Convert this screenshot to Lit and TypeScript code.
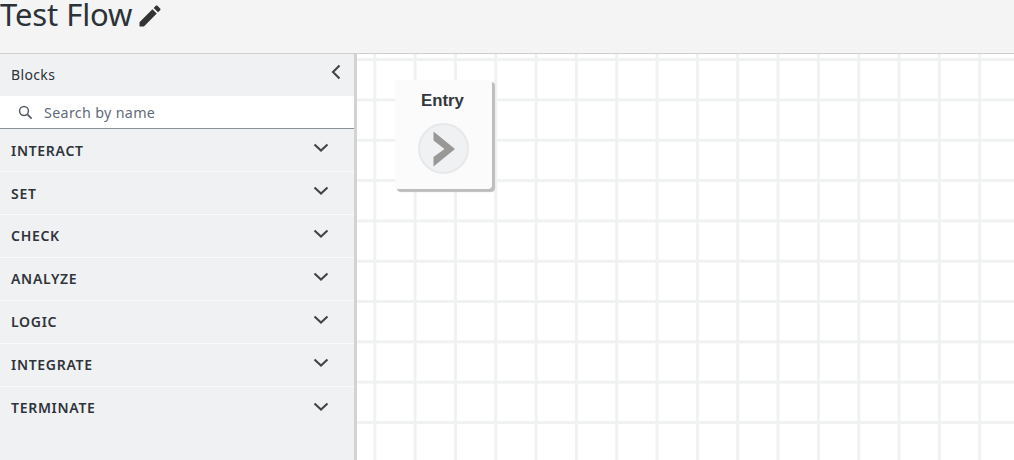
import { LitElement, html, css, svg } from "lit";
import { customElement } from "lit/decorators.js";

const chevronDown = svg`<path d="M2.5 5.5 9 11.5l6.500-6" fill="none" stroke="#444" stroke-width="2.1"/>`;

@customElement("app-root")
export class AppRoot extends LitElement {
  static styles = css`
    :host {
      display: flex;
      flex-direction: column;
      width: 1014px;
      height: 460px;
      overflow: hidden;
      font-family: "Noto Sans", "Open Sans", sans-serif;
      color: #2b3238;
      background: #fff;
    }
    .top {
      height: 53px;
      flex: none;
      background: #f4f4f4;
      border-bottom: 1px solid #d0d0d0;
      display: flex;
      align-items: flex-start;
    }
    .title {
      font-size: 31px;
      line-height: 29px;
      font-weight: 400;
      color: #2b3238;
      letter-spacing: -0.1px;
    }
    .pencil {
      width: 28px;
      height: 28px;
      margin: 2px 0 0 4px;
      fill: #333;
    }
    .main {
      flex: 1;
      display: flex;
      min-height: 0;
    }
    .side {
      width: 354px;
      flex: none;
      background: #f0f1f3;
      border-right: 3px solid #d3d3d3;
      display: flex;
      flex-direction: column;
    }
    .side-head {
      height: 42px;
      padding: 0 11px;
      display: flex;
      align-items: center;
      justify-content: space-between;
      font-size: 14px;
      letter-spacing: 0.35px;
      color: #2b3238;
    }
    .side-head span {
      margin-top: -1px;
    }
    .collapse {
      width: 12px;
      height: 18px;
      margin-top: -6px;
      transform: translateX(-1px);
    }
    .search {
      height: 32px;
      background: #fff;
      border-bottom: 1px solid #879196;
      display: flex;
      align-items: center;
      padding-left: 18px;
      gap: 11px;
      font-size: 14.3px;
      letter-spacing: 0.32px;
      color: #5f6b7a;
    }
    .search svg {
      width: 15px;
      height: 15px;
      flex: none;
    }
    .row {
      height: 43px;
      box-sizing: border-box;
      border-bottom: 1px solid #fafafa;
      padding: 0 24px 2px 11px;
      display: flex;
      align-items: center;
      justify-content: space-between;
      font-size: 14px;
      font-weight: 600;
      letter-spacing: 0.7px;
      color: #2f343a;
    }
    .row:last-child {
      border-bottom: 0;
    }
    .row svg {
      width: 18px;
      height: 18px;
      margin-top: -2px;
    }
    .row.low span {
      padding-top: 2px;
    }
    .canvas {
      flex: 1;
      position: relative;
      background-color: #fff;
      background-image:
        linear-gradient(to right, #f0f1f1 2.7px, transparent 2.7px),
        linear-gradient(to bottom, #f0f1f1 2.7px, transparent 2.7px);
      background-size: 40.33px 40.33px;
      background-position: 16.3px 4.1px;
    }
    .node {
      position: absolute;
      left: 38px;
      top: 26px;
      width: 97px;
      height: 109px;
      background: #fbfbfb;
      border-radius: 4px;
      box-shadow: 2.5px 2.5px 1px #bdbdbd;
      display: flex;
      flex-direction: column;
      align-items: center;
    }
    .node-label {
      font-family: "Liberation Sans", Arial, sans-serif;
      font-size: 16.8px;
      font-weight: 700;
      color: #33373d;
      line-height: 18px;
      margin: 12px 2px 0 0;
    }
    .node-btn {
      width: 51px;
      height: 51px;
      margin: 13px 1px 0 0;
      box-sizing: border-box;
      border-radius: 50%;
      background: #f0f1f3;
      border: 2px solid #e7e8e9;
      display: flex;
      align-items: center;
      justify-content: center;
    }
    .node-btn svg {
      width: 24px;
      height: 36px;
      fill: #999896;
    }
  `;

  private items = ["INTERACT", "SET", "CHECK", "ANALYZE", "LOGIC", "INTEGRATE", "TERMINATE"];

  render() {
    return html`
      <div class="top">
        <span class="title">Test Flow</span>
        <svg class="pencil" viewBox="0 0 24 24">
          <path d="M3 17.25V21h3.75L17.81 9.94l-3.75-3.75L3 17.25zM20.71 7.04c.39-.39.39-1.02 0-1.41l-2.34-2.34c-.39-.39-1.02-.39-1.41 0l-1.83 1.83 3.75 3.75 1.83-1.83z"/>
        </svg>
      </div>
      <div class="main">
        <aside class="side">
          <div class="side-head">
            <span>Blocks</span>
            <svg class="collapse" viewBox="0 0 12 18">
              <path d="M9.5 2.5 3 9l6.5 6.5" fill="none" stroke="#444" stroke-width="2.1"/>
            </svg>
          </div>
          <div class="search">
            <svg viewBox="0 0 15 15">
              <circle cx="6" cy="6" r="4.4" fill="none" stroke="#545b64" stroke-width="1.5"/>
              <path d="M9.4 9.4 13.6 13.6" stroke="#545b64" stroke-width="1.7" fill="none"/>
            </svg>
            <span>Search by name</span>
          </div>
          ${this.items.map(
            (t, i) => html`<div class="row ${i < 2 ? "low" : ""}">
              <span>${t}</span>
              <svg viewBox="0 0 18 18">${chevronDown}</svg>
            </div>`
          )}
        </aside>
        <div class="canvas">
          <div class="node">
            <div class="node-label">Entry</div>
            <div class="node-btn">
              <svg viewBox="-1.5 0 24 36">
                <path d="M1 .5 22.500 18 1 35.500V26L12 18 1 9.500z"/>
              </svg>
            </div>
          </div>
        </div>
      </div>
    `;
  }
}
